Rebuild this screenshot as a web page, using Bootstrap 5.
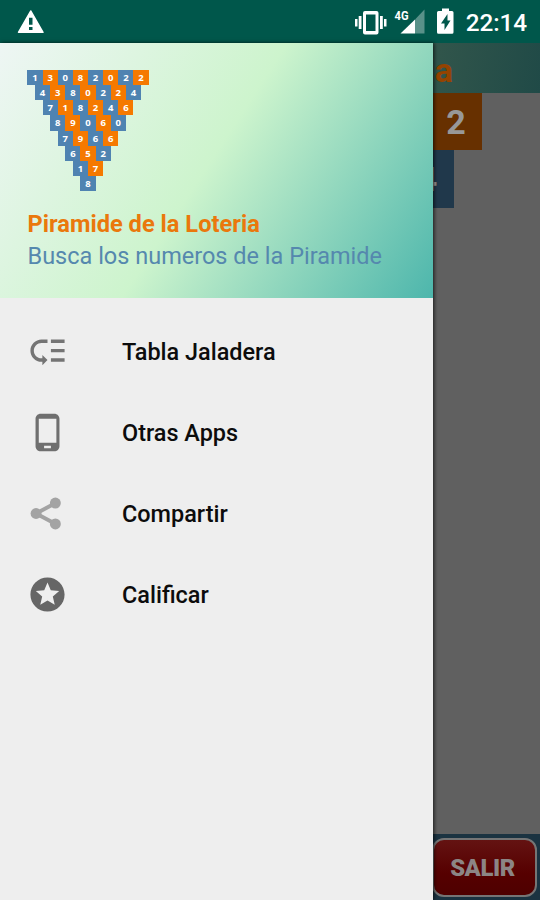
<!DOCTYPE html>
<html lang="es">
<head>
<meta charset="utf-8">
<meta name="viewport" content="width=device-width, initial-scale=1">
<title>Piramide de la Loteria</title>
<link href="https://cdn.jsdelivr.net/npm/bootstrap@5.3.0/dist/css/bootstrap.min.css" rel="stylesheet">
<style>
body{font-family:Roboto,"Liberation Sans",sans-serif;width:540px;height:900px;overflow:hidden;background:#606060}
svg{display:block;flex:none}
.statusbar{height:43px;background:#00574b;padding:0 13px 0 17px}
.clock{font-size:24.3px;font-weight:500;line-height:44px;margin-left:10px;padding-top:2px;letter-spacing:-.1px}
.app{background:#606060}
.app-head{height:50px;background:linear-gradient(100deg,#58605e,#35584c 75%,#204a47);padding-right:87px;color:#954300;font-size:34px;font-weight:700;line-height:54px}
.tile{width:57.3px;height:57.3px;color:#989898;font-size:34px;font-weight:700;padding:2px 0 0 5px}
.tile.o{background:#673000}.tile.b{background:#20384b}
.pyr{margin-left:23.5px;width:459px}
.app-foot{height:66px;background:#1b3341;padding:4px 3px 3px 0}
.exit{width:105px;border:2px solid #757575;border-radius:12px;background:linear-gradient(#641312,#560000 60%,#4e0000);color:#8c8585;font-size:23.8px;font-weight:900;letter-spacing:-.4px;padding:2px 4px 0 0}
.drawer{width:432.5px;background:#eee;box-shadow:1px 0 4px rgba(0,0,0,.75);z-index:2}
.drawer-head{height:254.5px;padding:27px 27.5px 0;background:linear-gradient(123deg,#eef6f4 0%,#cdf4cd 48%,#4db6ac 100%)}
.logo{width:121px}
.logo .cell{width:15.15px;height:15.15px;color:#fff;font:700 9.5px/11px "Open Sans",sans-serif;text-align:center}
.cell.o{background:#f57900}.cell.b{background:#4f83b1}
.title{font-size:23.65px;font-weight:700;line-height:32px;color:#ea780c;margin-top:16.5px}
.sub{font-size:23.5px;line-height:33px;color:#5588ae}
.menu{padding-top:13px}
.item{height:81px;padding-left:27px;color:#0c0c0c;font-size:23.45px;font-weight:500}
.item span{padding-top:4px}
.item svg{width:41px;height:41px;margin-right:54px}
</style>
<script src="https://cdn.jsdelivr.net/npm/bootstrap@5.3.0/dist/js/bootstrap.bundle.min.js"></script>
</head>
<body class="d-flex flex-column m-0">
<header class="statusbar d-flex align-items-center text-white flex-shrink-0">
  <svg class="me-auto" width="28" height="25" viewBox="0 0 28 25"><path fill="#fff" stroke="#fff" stroke-width="1.5" stroke-linejoin="round" d="M13.7 2L26 23.3H1.5z"/><path fill="#00574b" d="M12 8.8h3.5v7H12zM12 18h3.5v3H12z"/></svg>
  <svg width="102" height="43" viewBox="0 0 102 43">
    <g fill="#fff"><path fill-rule="evenodd" d="M11 11h11.500q2 0 2 2v19.500q0 2-2 2H11q-2 0-2-2V13q0-2 2-2zm1 3.500v16.500h9.500V14.500z"/><path d="M4.700 16h2.800v13H4.700zM1 19h2.500v7.500H1zM26 16h2.800v13H26zM30 19h2.500v7.500H30z"/>
    <path d="M46.500 33.500L61 19.500v14z"/><path opacity=".35" d="M61 19.500L70.500 9.500v24H61z"/>
    <path fill-rule="evenodd" d="M88 8.500h7v2.400h3q1.500 0 1.500 1.500v19.800q0 1.500-1.500 1.500H84.500q-1.500 0-1.500-1.500V12.400q0-1.500 1.500-1.500H88zM93.500 14l-6.500 9.500h3.500V30l6-9.500h-3z"/></g>
    <text x="40.500" y="19.500" fill="#fff" font-size="12.500" font-weight="700" textLength="14" lengthAdjust="spacingAndGlyphs">4G</text>
  </svg>
  <span class="clock">22:14</span>
</header>
<div class="position-relative flex-grow-1">
  <main class="app d-flex flex-column h-100">
    <div class="app-head text-end">Piramide de la Loteria</div>
    <div class="pyr" id="board"></div>
    <div class="app-foot d-flex justify-content-end mt-auto"><button class="exit" type="button">SALIR</button></div>
  </main>
  <aside class="drawer position-absolute top-0 start-0 h-100">
    <div class="drawer-head">
      <div class="logo" id="logo"></div>
      <div class="title">Piramide de la Loteria</div>
      <div class="sub">Busca los numeros de la Piramide</div>
    </div>
    <nav class="menu">
      <div class="item d-flex align-items-center"><svg viewBox="0 0 24 24" fill="#747474"><path d="M14 5h8v2h-8zm0 5.500h8v2h-8zm0 5.500h8v2h-8zM2 11.500C2 15.080 4.920 18 8.500 18H9v2l3-3-3-3v2h-.5C6.020 16 4 13.980 4 11.500S6.020 7 8.500 7H12V5H8.500C4.920 5 2 7.920 2 11.500z"/></svg><span>Tabla Jaladera</span></div>
      <div class="item d-flex align-items-center"><svg viewBox="0 0 24 24" fill="#6f6f6f"><path fill-rule="evenodd" d="M16 1H8C6.340 1 5 2.340 5 4v16c0 1.660 1.340 3 3 3h8c1.660 0 3-1.340 3-3V4c0-1.660-1.340-3-3-3zm-2 20.200h-4v-1.400h4zM17.200 18H6.900V3.900h10.300z"/></svg><span>Otras Apps</span></div>
      <div class="item d-flex align-items-center"><svg viewBox="0 0 24 24" fill="none" stroke="#a3a3a3" stroke-width="2.300"><path d="M16.500 6L5.300 12l11.200 6"/><g fill="#a3a3a3" stroke="none"><circle cx="16.600" cy="5.900" r="3.200"/><circle cx="5.300" cy="12" r="3.200"/><circle cx="16.600" cy="18.100" r="3.200"/></g></svg><span>Compartir</span></div>
      <div class="item d-flex align-items-center"><svg viewBox="0 0 24 24" fill="#666"><path d="M11.990 2C6.470 2 2 6.480 2 12s4.470 10 9.990 10C17.520 22 22 17.520 22 12S17.520 2 11.990 2zm4.240 16L12 15.450 7.770 18l1.120-4.810-3.730-3.230 4.920-.42L12 5l1.920 4.530 4.920.42-3.730 3.230L16.230 18z"/></svg><span>Calificar</span></div>
    </nav>
  </aside>
</div>
<script>
const rows = ["13082022","4380224","718246","89060","7966","652","17","8"];
function build(id, list, cls) {
  document.getElementById(id).innerHTML = list.map(r =>
    '<div class="d-flex justify-content-center">' + [...r].map((d, i) =>
      `<div class="${cls} ${i % 2 ? 'o' : 'b'} d-flex align-items-center justify-content-center flex-shrink-0">${d}</div>`).join('') + '</div>').join('');
}
build('logo', rows, 'cell');
build('board', rows.slice(0, 2), 'tile');
</script>
</body>
</html>
